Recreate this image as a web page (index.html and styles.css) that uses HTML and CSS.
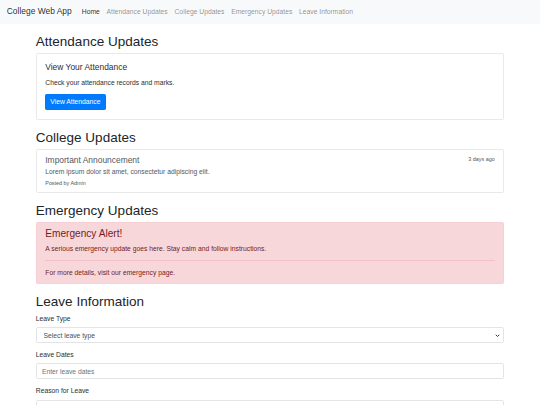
FILE: index.html
```html
<!DOCTYPE html>
<html lang="en">
<head>
<meta charset="utf-8">
<title>College Web App</title>
<link rel="stylesheet" href="styles.css">
</head>
<body>
<nav class="navbar">
  <a class="brand" href="#">College Web App</a>
  <ul class="nav">
    <li><a class="nav-link active" href="#">Home</a></li>
    <li><a class="nav-link" href="#">Attendance Updates</a></li>
    <li><a class="nav-link" href="#">College Updates</a></li>
    <li><a class="nav-link" href="#">Emergency Updates</a></li>
    <li><a class="nav-link" href="#">Leave Information</a></li>
  </ul>
</nav>

<main class="container">
  <section class="section">
    <h2 class="section-title">Attendance Updates</h2>
    <div class="card">
      <div class="card-body">
        <h5 class="card-title">View Your Attendance</h5>
        <p class="card-text">Check your attendance records and marks.</p>
        <a href="#" class="btn">View Attendance</a>
      </div>
    </div>
  </section>

  <section class="section">
    <h2 class="section-title">College Updates</h2>
    <div class="list-group">
      <a href="#" class="list-item">
        <div class="item-head">
          <h5 class="item-title">Important Announcement</h5>
          <small class="small">3 days ago</small>
        </div>
        <p class="item-text">Lorem ipsum dolor sit amet, consectetur adipiscing elit.</p>
        <small class="small">Posted by Admin</small>
      </a>
    </div>
  </section>

  <section class="section">
    <h2 class="section-title">Emergency Updates</h2>
    <div class="alert">
      <h4 class="alert-heading">Emergency Alert!</h4>
      <p class="alert-text">A serious emergency update goes here. Stay calm and follow instructions.</p>
      <hr class="alert-rule">
      <p class="alert-text last">For more details, visit our emergency page.</p>
    </div>
  </section>

  <section class="section">
    <h2 class="section-title">Leave Information</h2>
    <form class="form">
      <div class="form-group">
        <label class="label" for="leaveType">Leave Type</label>
        <div class="select-wrap">
          <select id="leaveType" class="control select">
            <option>Select leave type</option>
            <option>Sick Leave</option>
            <option>Casual Leave</option>
          </select>
          <svg class="select-arrow" width="5" height="5" viewBox="0 0 10 10" aria-hidden="true">
            <path d="M1.5 3.5 L5 7 L8.5 3.5" fill="none" stroke="#333" stroke-width="2"/>
          </svg>
        </div>
      </div>
      <div class="form-group">
        <label class="label" for="leaveDates">Leave Dates</label>
        <input id="leaveDates" class="control" type="text" placeholder="Enter leave dates">
      </div>
      <div class="form-group">
        <label class="label" for="reason">Reason for Leave</label>
        <textarea id="reason" class="control textarea" rows="3" placeholder="Enter reason for leave"></textarea>
      </div>
    </form>
  </section>
</main>
</body>
</html>
```

FILE: styles.css
```css
* { box-sizing: border-box; }

html, body {
  margin: 0;
  padding: 0;
}

body {
  font-family: "Liberation Sans", Arial, sans-serif;
  font-size: 6.75px;
  line-height: 10.125px;
  color: #2b2f33;
  background: #fff;
}

a { text-decoration: none; }

/* Navbar */
.navbar {
  display: flex;
  align-items: center;
  background: #f8f9fa;
  padding: 3.375px 6.75px;
  height: 23.6px;
}

.brand {
  font-size: 8.4375px;
  line-height: 12.66px;
  padding: 2.11px 0;
  margin-right: 6.75px;
  color: rgba(0, 0, 0, 0.85);
}

.nav {
  display: flex;
  list-style: none;
  margin: 0;
  padding: 0;
}

.nav-link {
  display: block;
  padding: 3.375px 3.375px;
  color: rgba(0, 0, 0, 0.45);
}

.nav-link.active { color: rgba(0, 0, 0, 0.85); }

/* Layout */
.container {
  width: 468.3px;
  margin: 0 auto;
}

.section { margin-top: 10.125px; }

.section-title {
  font-size: 13.5px;
  line-height: 16.2px;
  font-weight: 400;
  margin: 0 0 3.375px;
  color: #212529;
}

/* Card */
.card {
  border: 1px solid #e9e9ea;
  border-radius: 1.69px;
  background: #fff;
}

.card-body { padding: 8.1px 8.44px; }

.card-title {
  font-size: 8.4375px;
  line-height: 10.125px;
  font-weight: 400;
  margin: 0 0 5.06px;
}

.card-text { margin: 0 0 6.75px; }

.btn {
  display: inline-block;
  background: #007bff;
  color: #fff;
  border-radius: 1.69px;
  padding: 2.95px 5.06px;
  line-height: 10.125px;
}

/* List group */
.list-group {
  border: 1px solid #e9e9ea;
  border-radius: 1.69px;
}

.list-item {
  display: block;
  padding: 4.8px 8.44px;
  color: #52585e;
}

.item-head {
  display: flex;
  justify-content: space-between;
  align-items: flex-start;
}

.item-title {
  font-size: 8.4375px;
  line-height: 10.125px;
  font-weight: 400;
  margin: 0 0 1.69px;
}

.item-text {
  margin: 0 0 1.69px;
}

.small {
  font-size: 5.4px;
  line-height: 8.1px;
  display: block;
}

/* Alert */
.alert {
  background: #f8d7da;
  color: #721c24;
  border: 1px solid #f6d0d4;
  border-radius: 1.69px;
  padding: 4.8px 8.44px;
}

.alert-heading {
  font-size: 10.125px;
  line-height: 12.15px;
  font-weight: 400;
  margin: 0 0 3.375px;
}

.alert-text { margin: 0 0 6.75px; }
.alert-text.last { margin-bottom: 0; }

.alert-rule {
  border: 0;
  border-top: 1px solid #f2c0c6;
  margin: 6.6px 0;
  height: 0;
}

/* Form */
.form-group { margin-bottom: 6.75px; }

.label {
  display: inline-block;
  margin-bottom: 3.375px;
}

.control {
  display: block;
  width: 100%;
  height: 16.03px;
  padding: 2.53px 5.06px;
  font-family: inherit;
  font-size: 6.75px;
  line-height: 10.125px;
  color: #495057;
  background: #fff;
  border: 1px solid #e2e5e8;
  border-radius: 1.69px;
}

.control::placeholder { color: #6c757d; opacity: 1; }

.select-wrap { position: relative; }

.select {
  appearance: none;
  -webkit-appearance: none;
  padding-left: 6.7px;
  padding-right: 14px;
}

.select-arrow {
  position: absolute;
  right: 4px;
  top: 5.5px;
  pointer-events: none;
}

.textarea {
  height: auto;
  resize: vertical;
}
```
